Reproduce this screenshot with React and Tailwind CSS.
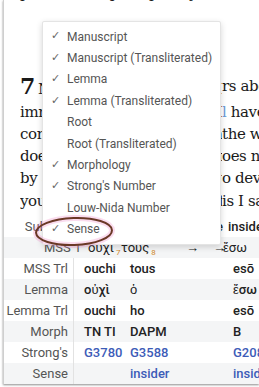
import React from 'react'

const serif = { fontFamily: '"DejaVu Serif", "Liberation Serif", serif' }

const menuItems = [
  { label: 'Manuscript', checked: true },
  { label: 'Manuscript (Transliterated)', checked: true },
  { label: 'Lemma', checked: true },
  { label: 'Lemma (Transliterated)', checked: true },
  { label: 'Root', checked: false },
  { label: 'Root (Transliterated)', checked: false },
  { label: 'Morphology', checked: true },
  { label: "Strong's Number", checked: true },
  { label: 'Louw-Nida Number', checked: false },
  { label: 'Sense', checked: true },
]

const lines = [
  { left: 'Now I want you to know, brothers and sisters, about', right: 'rs about' },
  { left: 'immorality among you that I should not need to', right: 'l have', blue: true },
  { left: 'concerning the things of which you wrote, it is good for', right: 'the w' },
  { left: 'does not have authority over her own body, but the husband', right: 'oes no' },
  { left: 'by agreement for a season, that you may give yourselves', right: 'o deve' },
  { left: 'your lack of self-control. But this I say by way of', right: 'is I say' },
]

const rows = [
  { label: 'MSS Trl', cells: ['ouchi', 'tous', 'esō'] },
  { label: 'Lemma', cells: ['οὐχὶ', 'ὁ', 'ἔσω'], shade: true },
  { label: 'Lemma Trl', cells: ['ouchi', 'ho', 'esō'] },
  { label: 'Morph', cells: ['TN TI', 'DAPM', 'B'], shade: true },
  { label: "Strong's", cells: ['G3780', 'G3588', 'G2080'], blue: true },
  { label: 'Sense', cells: ['', 'insider', 'insider'], shade: true, blue: true },
]

const Row = ({ label, cells, shade, blue }) => (
  <div className={`flex h-[21px] items-center whitespace-nowrap ${shade ? 'bg-[#f4f5f6]' : 'bg-white'}`}>
    <div className="w-[70px] shrink-0 h-full flex items-center justify-end pr-[5px] border-r border-[#e2e2e2] text-[#555]">
      {label}
    </div>
    <div className={`flex shrink-0 pl-[10px] font-medium ${blue ? 'text-[#3d5cb8]' : 'text-[#222]'}`}>
      <span className="w-[46px] shrink-0">{cells[0]}</span>
      <span className="w-[103px] shrink-0">{cells[1]}</span>
      <span className="shrink-0">{cells[2]}</span>
    </div>
  </div>
)

export default function App() {
  return (
    <div className="w-[259px] h-[387px] overflow-hidden bg-white relative" style={{ fontFamily: 'Roboto, "Liberation Sans", sans-serif' }}>
      <div className="ml-[3px] h-[384px] border-l border-[#cfcfcf] shadow-[0_1px_2px_rgba(0,0,0,0.45)] overflow-hidden bg-white">
        <div className="h-[216px] overflow-hidden pl-[16px] text-[15px] leading-[22.3px] tracking-[-0.4px] text-[#1a1a1a]" style={serif}>
          <div className="-mt-[18px] whitespace-nowrap">pass, and I speak plainly to those who</div>
          <div className="mt-[71px]">
            {lines.map((l, i) => (
              <div key={i} className="flex whitespace-nowrap">
                <span className="w-[202px] shrink-0 overflow-hidden">
                  {i === 0 && <span className="text-[22px] font-bold leading-none mr-[3px]">7</span>}
                  {l.left}
                </span>
                <span className="shrink-0">
                  {l.blue ? (
                    <>
                      <span className="text-[#6a9ad8]">l</span> have
                    </>
                  ) : (
                    l.right
                  )}
                </span>
              </div>
            ))}
          </div>
        </div>

        <div className="text-[13px]">
          <div className="flex h-[21px] items-center whitespace-nowrap bg-white">
            <div className="w-[70px] shrink-0 h-full flex items-center justify-end pr-[5px] border-r border-[#e2e2e2] text-[#555]">
              Subject
            </div>
            <span className="w-[149px] shrink-0 text-right font-medium text-[#222]">the</span>
            <span className="ml-[5px] shrink-0 font-medium text-[#222]">insider</span>
          </div>
          <div className="flex h-[21px] items-center whitespace-nowrap bg-[#f4f5f6] pl-[40px] text-[#222]">
            <span className="w-[44px] shrink-0 text-[#555]">MSS 1</span>
            <span className="w-[33px] shrink-0">
              οὐχὶ<span className="text-[8px] text-[#d08a2a] ml-[2px] relative top-[3px]">7</span>
            </span>
            <span className="w-[65px] shrink-0">
              τοὺς<span className="text-[8px] text-[#d08a2a] ml-[2px] relative top-[3px]">8</span>
            </span>
            <span className="w-[27px] shrink-0">→</span>
            <span className="w-[10px] shrink-0">→</span>
            <span className="shrink-0">ἔσω</span>
          </div>
          {rows.map((r) => (
            <Row key={r.label} {...r} />
          ))}
        </div>
      </div>

      <div className="absolute left-[42px] top-[21px] w-[179px] bg-white border border-[#e4e4e4] rounded-[2px] shadow-[0_2px_6px_rgba(0,0,0,0.16)] py-[4px] text-[12px] text-[#555]">
        {menuItems.map((m) => (
          <div key={m.label} className="flex h-[21.4px] items-center whitespace-nowrap">
            <span className="w-[24px] pl-[8px] text-[11px] text-[#666]">{m.checked ? '✓' : ''}</span>
            <span>{m.label}</span>
          </div>
        ))}
      </div>

      <svg className="absolute left-[33px] top-[215px]" width="82" height="33" viewBox="0 0 82 33">
        <ellipse cx="41" cy="16.5" rx="38" ry="13.5" fill="none" stroke="rgba(240,140,200,0.3)" strokeWidth="6" transform="rotate(-2 41 16.5)" />
        <ellipse cx="41" cy="16.5" rx="38" ry="13.5" fill="none" stroke="#6a3826" strokeWidth="2" transform="rotate(-2 41 16.5)" />
      </svg>
    </div>
  )
}
